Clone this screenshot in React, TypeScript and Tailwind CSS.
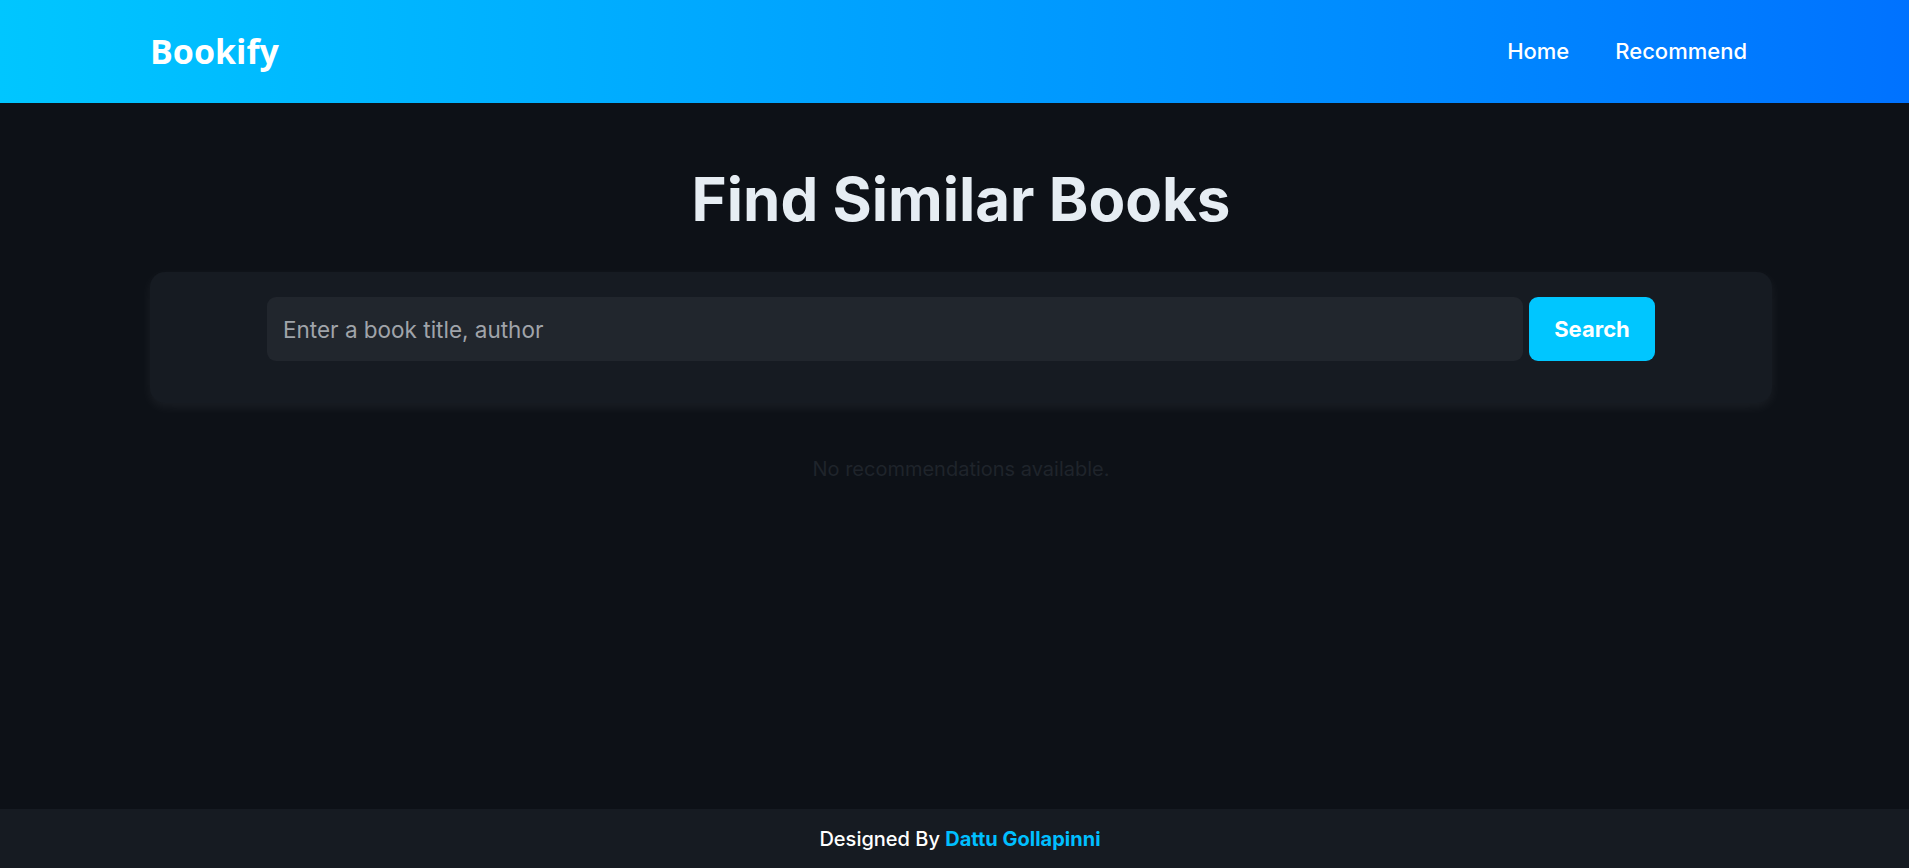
import * as React from 'react';

const NavLink: React.FC<{ label: string }> = ({ label }) => (
  <a href="#" className="text-[22px] font-medium text-white hover:opacity-90">
    {label}
  </a>
);

const App: React.FC = () => {
  const [query, setQuery] = React.useState('');

  return (
    <div className="flex min-h-screen flex-col bg-[#0d1117] font-['Inter',sans-serif]">
      <header className="flex h-[103px] items-center justify-between bg-gradient-to-r from-[#00c6ff] to-[#0072ff] pl-[150px] pr-[162px]">
        <span className="font-['Open_Sans',sans-serif] text-[34px] font-bold text-white">
          Bookify
        </span>
        <nav className="flex items-center gap-[46px]">
          <NavLink label="Home" />
          <NavLink label="Recommend" />
        </nav>
      </header>

      <main className="flex-1 pl-[150px] pr-[137px] pt-[62px]">
        <h1 className="text-center text-[60px] font-bold leading-[68px] text-[#e6edf3]">
          Find Similar Books
        </h1>

        <div className="mt-[39px] rounded-[15px] bg-[#161b22] px-[25px] pb-[42px] pt-[25px] shadow-[0_4px_12px_rgba(255,255,255,0.06)]">
          <form
            onSubmit={(e) => e.preventDefault()}
            className="mx-auto flex w-[1388px] gap-[6px]"
          >
            <input
              value={query}
              onChange={(e) => setQuery(e.target.value)}
              placeholder="Enter a book title, author"
              className="h-[64px] flex-1 rounded-[9px] bg-[#21262d] px-4 text-[22.5px] text-[#e6edf3] outline-none placeholder:text-[#a0a4aa]"
            />
            <button
              type="submit"
              className="h-[64px] w-[126px] rounded-[9px] bg-[#00c6ff] text-[22px] font-bold text-white"
            >
              Search
            </button>
          </form>
        </div>

        <p className="mt-[51px] text-center text-[20px] text-[#1f242b]">
          No recommendations available.
        </p>
      </main>

      <footer className="flex h-[59px] items-center justify-center bg-[#161b22] pl-[11px] text-[20px] font-medium text-white">
        <span>
          Designed By{' '}
          <span className="font-bold text-[#00bfff]">Dattu Gollapinni</span>
        </span>
      </footer>
    </div>
  );
};

export default App;
